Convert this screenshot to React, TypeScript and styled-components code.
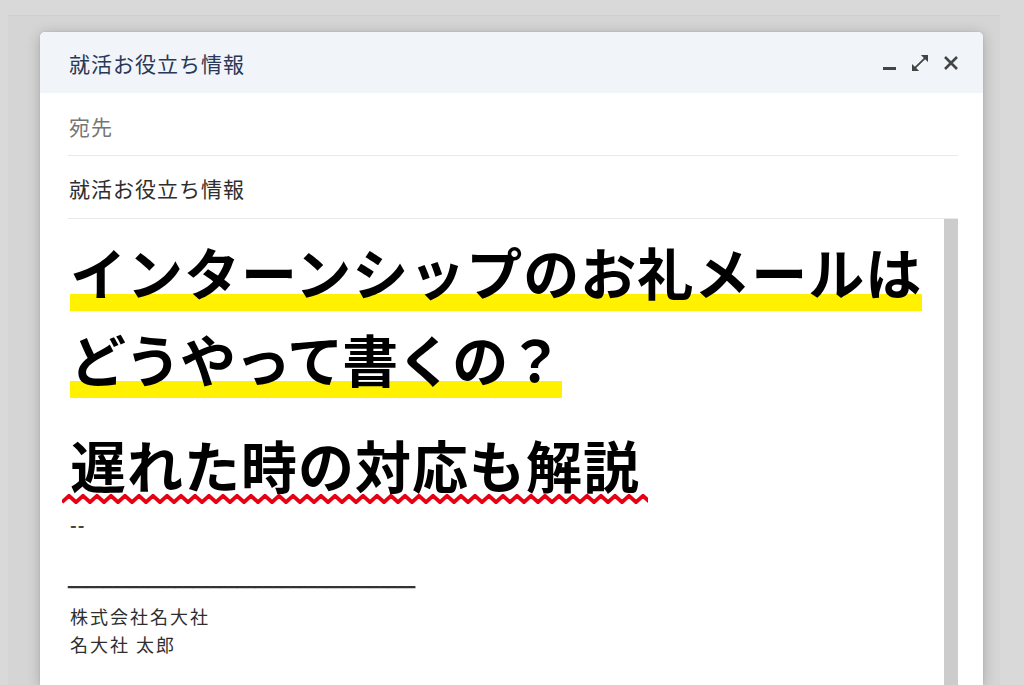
import React from "react";
import styled, { createGlobalStyle } from "styled-components";

const GlobalStyle = createGlobalStyle`
  html, body { margin: 0; padding: 0; }
  body {
    background: #d8d8d8;
    font-family: "Noto Sans CJK JP", "Noto Sans", sans-serif;
  }
`;

const Page = styled.div`
  height: 685px;
  overflow: hidden;
  box-sizing: border-box;
  padding: 15px 24px 0 8px;
  background: #d9d9d9;
  display: flex;
  flex-direction: column;
`;

const BackPanel = styled.div`
  flex: 1;
  display: flex;
  flex-direction: column;
  border-top: 1px solid #cfcfcf;
  background: #d5d5d5;
  padding: 16px 17px 0 32px;
`;

const Window = styled.div`
  flex: 1;
  display: flex;
  flex-direction: column;
  background: #ffffff;
  border-radius: 5px 5px 0 0;
  box-shadow: 0 2px 14px rgba(0, 0, 0, 0.22), 0 0 2px rgba(0, 0, 0, 0.12);
  overflow: hidden;
`;

const Header = styled.div`
  height: 61px;
  flex: none;
  display: flex;
  align-items: center;
  justify-content: space-between;
  background: #f1f4f9;
  padding: 0 24px 0 29px;
`;

const HeaderTitle = styled.div`
  font-size: 21px;
  letter-spacing: 1px;
  color: #283857;
  line-height: 26px;
  font-weight: 400;
`;

const IconRow = styled.div`
  display: flex;
  align-items: center;
  gap: 15px;
  padding-top: 1px;
`;

const IconBox = styled.span`
  width: 16px;
  height: 16px;
  display: block;
  svg { display: block; }
`;

const Body = styled.div`
  flex: 1;
  display: flex;
  flex-direction: column;
  padding: 0 25px 0 28px;
`;

const FieldRow = styled.div<{ $muted?: boolean; $top: number; $bottom: number }>`
  flex: none;
  font-size: 21px;
  letter-spacing: 1px;
  line-height: 26px;
  font-weight: 400;
  padding: ${(p) => p.$top}px 0 ${(p) => p.$bottom}px 1px;
  border-bottom: 1px solid #e7e9ec;
  color: ${(p) => (p.$muted ? "#767676" : "#2e2e2e")};
`;

const EditorRow = styled.div`
  flex: 1;
  display: flex;
`;

const Editor = styled.div`
  flex: 1;
  padding: 8px 0 0 2px;
  color: #333333;
`;

const Scrollbar = styled.div`
  width: 14px;
  flex: none;
  background: #cccccc;
`;

const Heading = styled.div`
  font-size: 56px;
  font-weight: 700;
  letter-spacing: 1px;
  line-height: 87px;
  color: #000000;
  margin: 0;
`;

const Marker = styled.span`
  background: linear-gradient(transparent 79%, #fff100 79%);
  -webkit-box-decoration-break: clone;
  box-decoration-break: clone;
`;

const TightTail = styled.span`
  letter-spacing: -1px;
`;

const SubHeading = styled.div`
  font-size: 56px;
  font-weight: 700;
  letter-spacing: 1px;
  line-height: 87px;
  color: #000000;
  margin-top: 19px;
`;

const Squiggled = styled.span`
  position: relative;
  display: inline-block;
`;

const Squiggle = styled.svg`
  position: absolute;
  left: -8px;
  bottom: 3px;
  display: block;
`;

const TextLine = styled.div`
  font-size: 18px;
  letter-spacing: 2px;
  line-height: 28px;
  font-weight: 400;
  color: #2e2e2e;
`;

const Dash = styled(TextLine)`
  margin-top: 3px;
  letter-spacing: 1px;
  font-weight: 700;
  color: #444444;
`;

const RuleLine = styled.div`
  font-family: "Liberation Sans", Arial, sans-serif;
  font-size: 16px;
  line-height: 20px;
  color: #333333;
  text-shadow: 0 0.7px 0 #333333;
  margin-top: 31px;
  white-space: nowrap;
  margin-left: -2px;
`;

const Signature = styled.div`
  margin-top: 13px;
`;

const MinimizeIcon = () => (
  <svg width="16" height="16" viewBox="0 0 16 16">
    <rect x="2" y="12" width="13" height="3" fill="#444" />
  </svg>
);

const ExpandIcon = () => (
  <svg width="16" height="16" viewBox="3 3 18 18">
    <path
      d="M21 11V3h-8l3.29 3.29-10 10L3 13v8h8l-3.29-3.29 10-10z"
      fill="#444"
    />
  </svg>
);

const CloseIcon = () => (
  <svg width="16" height="16" viewBox="0 0 16 16">
    <path d="M2 2 L14 14 M14 2 L2 14" stroke="#444" strokeWidth="2.6" fill="none" />
  </svg>
);

const SQUIGGLE_WIDTH = 586;

const SquiggleLine = () => {
  const pts: string[] = [];
  const step = 7;
  for (let i = 0; i * step <= SQUIGGLE_WIDTH + step; i++) {
    pts.push(`${i * step},${i % 2 === 0 ? 8.2 : 1.8}`);
  }
  return (
    <Squiggle width={SQUIGGLE_WIDTH} height="10" viewBox={`0 0 ${SQUIGGLE_WIDTH} 10`}>
      <polyline points={pts.join(" ")} fill="none" stroke="#e60012" strokeWidth="3.8" />
    </Squiggle>
  );
};

export default function App() {
  return (
    <>
      <GlobalStyle />
      <Page>
        <BackPanel>
          <Window>
            <Header>
              <HeaderTitle>就活お役立ち情報</HeaderTitle>
              <IconRow>
                <IconBox>
                  <MinimizeIcon />
                </IconBox>
                <IconBox>
                  <ExpandIcon />
                </IconBox>
                <IconBox>
                  <CloseIcon />
                </IconBox>
              </IconRow>
            </Header>
            <Body>
              <FieldRow $muted $top={20} $bottom={16}>
                宛先
              </FieldRow>
              <FieldRow $top={19} $bottom={17}>
                就活お役立ち情報
              </FieldRow>
              <EditorRow>
                <Editor>
                  <Heading>
                    <Marker>
                      インターンシップのお礼メールは
                      <br />
                      <TightTail>どうやって書くの？</TightTail>
                    </Marker>
                  </Heading>
                  <SubHeading>
                    <Squiggled>
                      遅れた時の対応も解説
                      <SquiggleLine />
                    </Squiggled>
                  </SubHeading>
                  <Dash>--</Dash>
                  <RuleLine>{"_".repeat(39)}</RuleLine>
                  <Signature>
                    <TextLine>株式会社名大社</TextLine>
                    <TextLine>名大社 太郎</TextLine>
                  </Signature>
                </Editor>
                <Scrollbar />
              </EditorRow>
            </Body>
          </Window>
        </BackPanel>
      </Page>
    </>
  );
}
